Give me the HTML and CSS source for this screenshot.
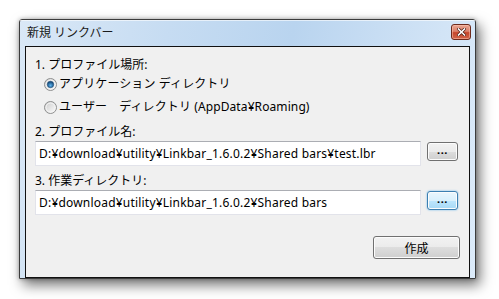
FILE: index.html
```html
<!DOCTYPE html>
<html lang="ja">
<head>
<meta charset="utf-8">
<title>新規 リンクバー</title>
<link rel="stylesheet" href="styles.css">
</head>
<body>
<div class="desk">
  <div class="window">
    <div class="titlebar">
      <span class="title">新規 リンクバー</span>
      <div class="close">
        <svg width="9" height="8" viewBox="0 0 9 8">
          <path d="M1.5 1 L7.5 7 M7.5 1 L1.5 7" stroke="#4a1a10" stroke-width="3" stroke-linecap="square"/>
          <path d="M1.5 1 L7.5 7 M7.5 1 L1.5 7" stroke="#ffffff" stroke-width="1.6" stroke-linecap="square"/>
        </svg>
      </div>
    </div>
    <div class="client">
      <div class="label l1">1. プロファイル場所:</div>
      <div class="radio-row r1">
        <svg class="radio" width="13" height="13" viewBox="0 0 13 13">
          <defs>
            <linearGradient id="rf1" x1="0" y1="0" x2="1" y2="1">
              <stop offset="0" stop-color="#c9c9c9"/>
              <stop offset="1" stop-color="#ffffff"/>
            </linearGradient>
            <radialGradient id="dot" cx="0.5" cy="0.65" r="0.6">
              <stop offset="0" stop-color="#5fb6f0"/>
              <stop offset="1" stop-color="#0f3f6e"/>
            </radialGradient>
          </defs>
          <circle cx="6.5" cy="6.5" r="6" fill="url(#rf1)" stroke="#8e8f8f"/>
          <circle cx="6.5" cy="6.5" r="4.5" fill="none" stroke="#f4f4f4" stroke-width="1"/>
          <circle cx="6.5" cy="6.5" r="3.2" fill="url(#dot)" stroke="#1d4f7c" stroke-width="0.6"/>
        </svg>
        <span>アプリケーション ディレクトリ</span>
      </div>
      <div class="radio-row r2">
        <svg class="radio" width="13" height="13" viewBox="0 0 13 13">
          <defs>
            <linearGradient id="rf2" x1="0" y1="0" x2="1" y2="1">
              <stop offset="0" stop-color="#c9c9c9"/>
              <stop offset="1" stop-color="#ffffff"/>
            </linearGradient>
          </defs>
          <circle cx="6.5" cy="6.5" r="6" fill="url(#rf2)" stroke="#8e8f8f"/>
          <circle cx="6.5" cy="6.5" r="4.5" fill="none" stroke="#f4f4f4" stroke-width="1"/>
        </svg>
        <span>ユーザー　ディレクトリ (AppData¥Roaming)</span>
      </div>
      <div class="label l2">2. プロファイル名:</div>
      <div class="field-row">
        <div class="textbox">D:¥download¥utility¥Linkbar_1.6.0.2¥Shared bars¥test.lbr</div>
        <div class="btn browse">...</div>
      </div>
      <div class="label l3">3. 作業ディレクトリ:</div>
      <div class="field-row">
        <div class="textbox">D:¥download¥utility¥Linkbar_1.6.0.2¥Shared bars</div>
        <div class="btn browse focused">...</div>
      </div>
      <div class="footer">
        <div class="btn create">作成</div>
      </div>
    </div>
  </div>
</div>
</body>
</html>
```
FILE: styles.css
```css
html, body {
  margin: 0;
  padding: 0;
  background: #ffffff;
}
body {
  width: 499px;
  height: 299px;
  overflow: hidden;
  font-family: "Noto Sans", "Noto Sans CJK JP", sans-serif;
  font-size: 12px;
  color: #000;
}
.desk {
  padding: 19px 0 0 19px;
}
.window {
  width: 455px;
  height: 258px;
  border: 1px solid #3c3c3c;
  border-radius: 3px 3px 0 0;
  background: linear-gradient(100deg, #dae8f6 0%, #c6dcf2 30%, #b9d4ef 55%, #d2e4f6 85%, #dcebfa 100%);
  box-shadow: 4px 6px 13px rgba(0, 0, 0, 0.55), 0 0 4px rgba(0, 0, 0, 0.3);
  display: flex;
  flex-direction: column;
}
.titlebar {
  height: 26px;
  display: flex;
  align-items: flex-start;
  justify-content: space-between;
  padding: 0 4px 0 7px;
  box-shadow: inset 0 1px 0 rgba(255,255,255,0.6);
}
.title {
  line-height: 26px;
  font-size: 12px;
  color: #1a1a1a;
}
.close {
  margin-top: 4px;
  width: 18px;
  height: 14px;
  border: 1px solid #6e2a1c;
  border-radius: 3px;
  background: linear-gradient(#e8a793 0%, #dc806a 45%, #c5452a 55%, #d2664a 100%);
  display: flex;
  align-items: center;
  justify-content: center;
  box-shadow: inset 0 0 0 1px rgba(255,200,180,0.5);
}
.client {
  margin: 0 5px;
  height: 225px;
  border: 1px solid #111;
  background: #f0f0f0;
  padding: 9px 9px 0 9px;
  display: flex;
  flex-direction: column;
}
.label {
  height: 18px;
  line-height: 18px;
}
.radio-row {
  height: 18px;
  line-height: 18px;
  display: flex;
  align-items: center;
  padding-left: 9px;
  letter-spacing: 0.1px;
}
.radio {
  margin-right: 2px;
  flex: none;
}
.r1 { margin-top: 1px; }
.r2 { margin-top: 5px; }
.l2 { margin-top: 7px; }
.l3 { margin-top: 6px; }
.field-row {
  display: flex;
  align-items: flex-start;
  gap: 6px;
}
.textbox {
  width: 381px;
  height: 23px;
  line-height: 23px;
  padding-left: 3px;
  background: #fff;
  border: 1px solid #e2e3ea;
  border-top-color: #abadb3;
  white-space: nowrap;
  overflow: hidden;
  letter-spacing: 0.2px;
}
.btn {
  box-sizing: border-box;
  border: 1px solid #707070;
  border-radius: 3px;
  background: linear-gradient(#f2f2f2 0%, #ebebeb 50%, #dddddd 50%, #cfcfcf 100%);
  box-shadow: inset 0 0 0 1px #fcfcfc;
  display: flex;
  align-items: center;
  justify-content: center;
}
.browse {
  width: 31px;
  height: 19px;
  margin-top: 1px;
  font-size: 11px;
  font-weight: bold;
  letter-spacing: 0.5px;
  padding-bottom: 4px;
}
.browse.focused {
  border-color: #3c7fb1;
  background: linear-gradient(#eaf6fd 0%, #d9f0fc 50%, #bee6fd 50%, #a7d9f5 100%);
  box-shadow: inset 0 0 0 1px #fcfcfc, 0 0 2px #5fb4ec;
}
.footer {
  margin-top: 21px;
  display: flex;
  justify-content: flex-end;
}
.create {
  width: 87px;
  height: 23px;
  font-size: 12px;
}
```
